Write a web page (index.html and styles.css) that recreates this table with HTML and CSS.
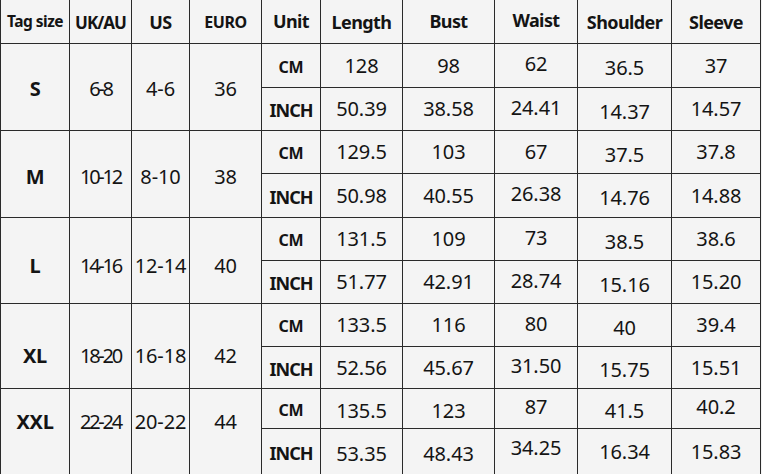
FILE: index.html
```html
<!DOCTYPE html>
<html lang="en">
<head>
<meta charset="utf-8">
<title>Size chart</title>
<link rel="stylesheet" href="styles.css">
</head>
<body>
<div class="chart">
  <div class="cell head tag">Tag size</div>
  <div class="cell head ukh">UK/AU</div>
  <div class="cell head">US</div>
  <div class="cell head euro">EURO</div>
  <div class="cell head hi">Unit</div>
  <div class="cell head">Length</div>
  <div class="cell head hi">Bust</div>
  <div class="cell head hi2">Waist</div>
  <div class="cell head">Shoulder</div>
  <div class="cell head">Sleeve</div>

  <div class="cell size span b1">S</div>
  <div class="cell uk span b1">6-8</div>
  <div class="cell num span b1">4-6</div>
  <div class="cell num span b1">36</div>
  <div class="cell unit">CM</div>
  <div class="cell num">128</div>
  <div class="cell num">98</div>
  <div class="cell num w">62</div>
  <div class="cell num sh">36.5</div>
  <div class="cell num">37</div>
  <div class="cell unit inch">INCH</div>
  <div class="cell num">50.39</div>
  <div class="cell num">38.58</div>
  <div class="cell num w">24.41</div>
  <div class="cell num sh">14.37</div>
  <div class="cell num">14.57</div>

  <div class="cell size span b2">M</div>
  <div class="cell uk span b2">10-12</div>
  <div class="cell num span b2">8-10</div>
  <div class="cell num span b2">38</div>
  <div class="cell unit">CM</div>
  <div class="cell num">129.5</div>
  <div class="cell num">103</div>
  <div class="cell num">67</div>
  <div class="cell num sh">37.5</div>
  <div class="cell num">37.8</div>
  <div class="cell unit inch">INCH</div>
  <div class="cell num">50.98</div>
  <div class="cell num">40.55</div>
  <div class="cell num w">26.38</div>
  <div class="cell num sh">14.76</div>
  <div class="cell num">14.88</div>

  <div class="cell size span b3">L</div>
  <div class="cell uk span b3">14-16</div>
  <div class="cell num span b3">12-14</div>
  <div class="cell num span b3">40</div>
  <div class="cell unit">CM</div>
  <div class="cell num">131.5</div>
  <div class="cell num">109</div>
  <div class="cell num w">73</div>
  <div class="cell num sh">38.5</div>
  <div class="cell num">38.6</div>
  <div class="cell unit inch">INCH</div>
  <div class="cell num">51.77</div>
  <div class="cell num">42.91</div>
  <div class="cell num w">28.74</div>
  <div class="cell num sh">15.16</div>
  <div class="cell num">15.20</div>

  <div class="cell size span b4">XL</div>
  <div class="cell uk span b4">18-20</div>
  <div class="cell num span b4">16-18</div>
  <div class="cell num span b4">42</div>
  <div class="cell unit">CM</div>
  <div class="cell num">133.5</div>
  <div class="cell num">116</div>
  <div class="cell num w">80</div>
  <div class="cell num sh">40</div>
  <div class="cell num">39.4</div>
  <div class="cell unit inch">INCH</div>
  <div class="cell num">52.56</div>
  <div class="cell num">45.67</div>
  <div class="cell num w">31.50</div>
  <div class="cell num sh">15.75</div>
  <div class="cell num">15.51</div>

  <div class="cell size span b5">XXL</div>
  <div class="cell uk span b5">22-24</div>
  <div class="cell num span b5">20-22</div>
  <div class="cell num span b5">44</div>
  <div class="cell unit">CM</div>
  <div class="cell num dn">135.5</div>
  <div class="cell num dn">123</div>
  <div class="cell num w">87</div>
  <div class="cell num dn">41.5</div>
  <div class="cell num w">40.2</div>
  <div class="cell unit inch">INCH</div>
  <div class="cell num dn">53.35</div>
  <div class="cell num dn">48.43</div>
  <div class="cell num w2">34.25</div>
  <div class="cell num">16.34</div>
  <div class="cell num">15.83</div>
</div>
</body>
</html>
```
FILE: styles.css
```css
html, body {
  margin: 0;
  padding: 0;
  background: #f4f4f4;
}

body {
  font-family: "Noto Sans", "Liberation Sans", sans-serif;
  color: #141414;
  width: 762px;
  height: 474px;
  overflow: hidden;
}

.chart {
  display: grid;
  grid-template-columns: 68px 61px 57px 71px 58px 81px 91px 82px 93px 88px;
  grid-template-rows: 43px 43px 42px 42px 43px 42px 42px 42px 41px 39px 45px;
  gap: 1px;
  padding: 0 1px;
  background: #2a2a2a;
  width: max-content;
}

.cell {
  background: #f4f4f4;
  display: flex;
  align-items: center;
  justify-content: center;
  box-sizing: border-box;
  white-space: nowrap;
  line-height: 1;
}

.head {
  font-weight: 700;
  font-size: 18px;
  letter-spacing: -0.6px;
  padding-top: 1px;
}

.head.tag {
  font-size: 15.5px;
  letter-spacing: -0.5px;
}

.head.ukh {
  font-size: 17px;
  letter-spacing: -1px;
}

.head.euro {
  font-size: 16px;
  letter-spacing: -0.4px;
}

.head.hi { padding: 0 0 2px; }
.head.hi2 { padding: 0 0 4px; }

.span { grid-row: span 2; }

.size {
  font-weight: 700;
  font-size: 20px;
  letter-spacing: -0.3px;
}

.uk {
  font-size: 20px;
  letter-spacing: -2.2px;
}

.num {
  font-size: 20px;
  letter-spacing: -0.1px;
}

.unit {
  font-weight: 700;
  font-size: 16px;
  letter-spacing: -0.3px;
  padding-top: 2px;
}

.unit.inch {
  font-size: 18px;
  letter-spacing: -1px;
}

.w { padding-bottom: 3px; }
.w2 { padding-bottom: 7px; }
.sh { padding-top: 5px; }
.dn { padding-top: 4px; }

.b1 { padding-top: 3px; }
.b2 { padding-top: 5px; }
.b3 { padding-top: 11px; }
.b4 { padding-top: 20px; }
.b5 { padding-bottom: 20px; }
```
